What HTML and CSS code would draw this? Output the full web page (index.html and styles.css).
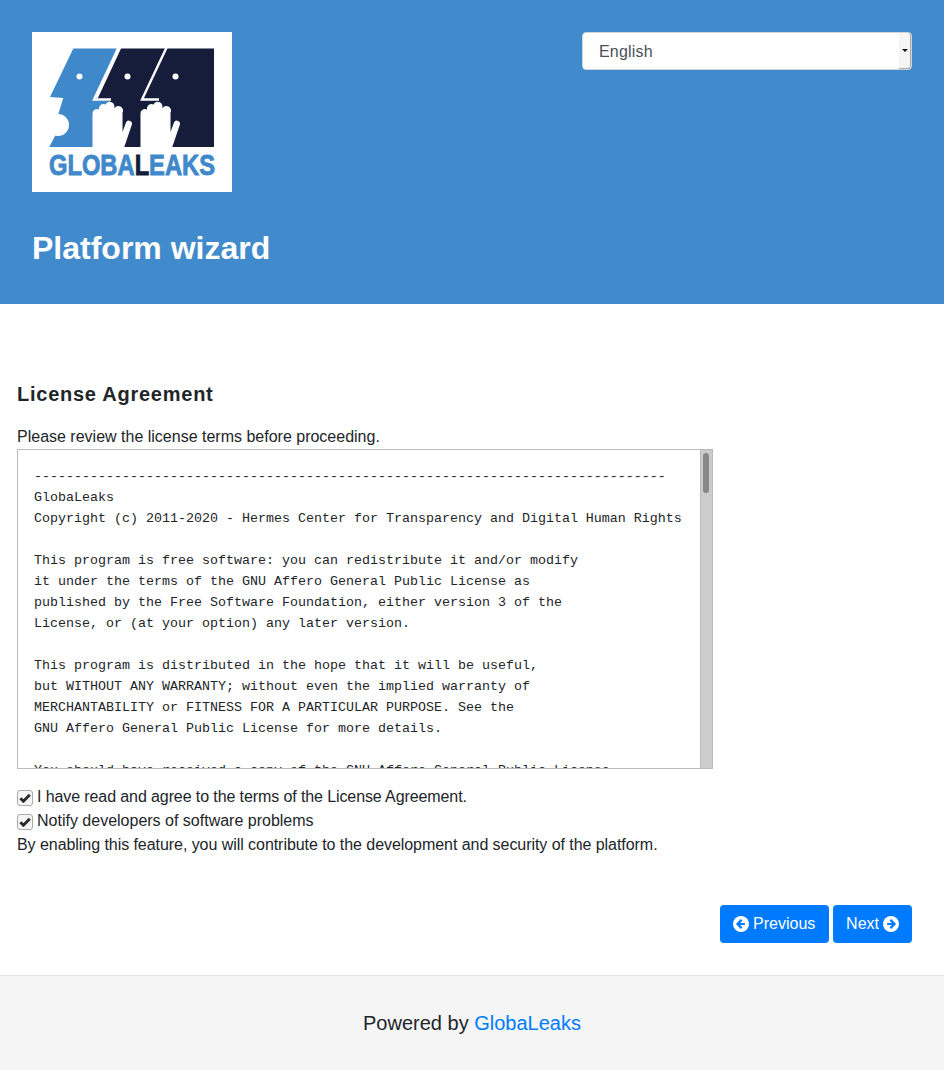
FILE: index.html
```html
<!DOCTYPE html>
<html lang="en">
<head>
<meta charset="utf-8">
<title>Platform wizard</title>
<link rel="stylesheet" href="styles.css">
</head>
<body>
<header class="header">
  <div class="header-top">
    <div class="logo">
      <svg class="logo-svg" viewBox="0 0 200 160" width="200" height="160">
        <polygon fill="#3f89cb" points="41.3,16.5 85,16.5 62,66 80,68 75,115 17.3,115 24,102 26,83 31.3,66 18,65"/>
        <circle cx="26" cy="93" r="11" fill="#fff"/>
        <polygon fill="#161d3a" points="89,16.5 182,16.5 182,115 75,115 78,69 65,68"/>
        <polyline fill="none" stroke="#fff" stroke-width="2.4" points="86.8,15 62,67.5 79,67.5"/>
        <polyline fill="none" stroke="#fff" stroke-width="2.4" points="134.8,15 110,67.5 127,67.5"/>
        <circle cx="47.5" cy="44.5" r="3" fill="#fff"/>
        <circle cx="95.5" cy="44.5" r="3" fill="#fff"/>
        <circle cx="143.5" cy="44.5" r="3" fill="#fff"/>
        <path id="hand" fill="#fff" d="M60.5 115V82A4.5 4.5 0 0 1 67 77.5A4.5 4.5 0 0 1 73.5 72.5A4.5 4.5 0 0 1 82 76.5A4.5 4.5 0 0 1 90.5 81V100L94 90.5A3 3 0 0 1 99.7 93L92.3 115Z"/>
        <use href="#hand" x="48"/>
        <text class="logo-text" x="17" y="143" textLength="166" lengthAdjust="spacingAndGlyphs"><tspan>GLOBA</tspan><tspan class="logo-dark">L</tspan><tspan>EAKS</tspan></text>
      </svg>
    </div>
    <div class="lang-select">
      <span class="lang-value">English</span>
      <span class="lang-button"><span class="caret"></span></span>
    </div>
  </div>
  <h1 class="title">Platform wizard</h1>
</header>

<main class="main">
  <h3 class="section-title">License Agreement</h3>
  <p class="intro">Please review the license terms before proceeding.</p>
  <div class="license">
    <pre class="license-text">-------------------------------------------------------------------------------
GlobaLeaks
Copyright (c) 2011-2020 - Hermes Center for Transparency and Digital Human Rights

This program is free software: you can redistribute it and/or modify
it under the terms of the GNU Affero General Public License as
published by the Free Software Foundation, either version 3 of the
License, or (at your option) any later version.

This program is distributed in the hope that it will be useful,
but WITHOUT ANY WARRANTY; without even the implied warranty of
MERCHANTABILITY or FITNESS FOR A PARTICULAR PURPOSE. See the
GNU Affero General Public License for more details.

You should have received a copy of the GNU Affero General Public License</pre>
    <div class="scrollbar"><div class="thumb"></div></div>
  </div>
  <div class="checks">
    <label class="check-row check-agree"><span class="checkbox"><svg viewBox="0 0 16 16" width="16" height="16"><path d="M3.4 8.2 6.4 11.2 12.8 4.8" fill="none" stroke="#2b2b2b" stroke-width="3"/></svg></span>I have read and agree to the terms of the License Agreement.</label>
    <label class="check-row"><span class="checkbox"><svg viewBox="0 0 16 16" width="16" height="16"><path d="M3.4 8.2 6.4 11.2 12.8 4.8" fill="none" stroke="#2b2b2b" stroke-width="3"/></svg></span>Notify developers of software problems</label>
    <div class="check-note">By enabling this feature, you will contribute to the development and security of the platform.</div>
  </div>
  <div class="actions">
    <button class="btn btn-prev" type="button"><svg class="btn-icon" viewBox="0 0 16 16" width="16" height="16"><circle cx="8" cy="8" r="8" fill="#fff"/><path d="M8.6 3.9 4.5 8l4.1 4.1M4.9 8h7" fill="none" stroke="#007bff" stroke-width="2.2"/></svg> Previous</button>
    <button class="btn" type="button">Next <svg class="btn-icon" viewBox="0 0 16 16" width="16" height="16"><circle cx="8" cy="8" r="8" fill="#fff"/><path d="M7.4 3.9 11.5 8l-4.1 4.1M11.1 8h-7" fill="none" stroke="#007bff" stroke-width="2.2"/></svg></button>
  </div>
</main>

<footer class="footer">Powered by <a class="footer-link" href="#">GlobaLeaks</a></footer>
</body>
</html>
```
FILE: styles.css
```css
* { box-sizing: border-box; }
html, body { margin: 0; padding: 0; }
body {
  font-family: "Liberation Sans", Arial, sans-serif;
  font-size: 16px;
  line-height: 24px;
  color: #212529;
  background: #fff;
}
.header {
  height: 304px;
  background: #418bcc;
  padding: 32px 32px 0;
}
.header-top {
  display: flex;
  justify-content: space-between;
  align-items: flex-start;
}
.logo { width: 200px; height: 160px; background: #fff; }
.logo-svg { display: block; }
.logo-text {
  font-family: "Liberation Sans Narrow", "Liberation Sans", sans-serif;
  font-size: 29px;
  font-weight: 700;
  fill: #3f89cb;
  stroke: #3f89cb;
  stroke-width: 0.9px;
}
.logo-dark { fill: #161d3a; stroke: #161d3a; }
.lang-select {
  width: 330px;
  height: 38px;
  display: flex;
  justify-content: space-between;
  background: #fff;
  border: 1px solid #ced4da;
  border-radius: 4px;
  padding-left: 16px;
  color: #495057;
  line-height: 38px;
  letter-spacing: 0.2px;
}
.lang-button {
  width: 12px;
  height: 36px;
  display: flex;
  align-items: center;
  justify-content: center;
  background: #f5f5f5;
  border-right: 1px solid #aaa;
  border-bottom: 1px solid #aaa;
  border-radius: 0 3px 3px 0;
}
.caret {
  width: 0;
  height: 0;
  border-left: 3px solid transparent;
  border-right: 3px solid transparent;
  border-top: 3px solid #111;
}
.title {
  margin: 36px 0 0;
  font-size: 32px;
  line-height: 40px;
  font-weight: 700;
  color: #fff;
}
.main { padding: 0 32px 0 17px; }
.section-title {
  margin: 0;
  padding-top: 77px;
  font-size: 20px;
  line-height: 26px;
  font-weight: 700;
  letter-spacing: 0.75px;
}
.intro { margin: 18px 0 0; line-height: 24px; }
.license {
  width: 696px;
  height: 320px;
  border: 1px solid #bbb;
  display: flex;
  overflow: hidden;
}
.license-text {
  flex: 1;
  margin: 0;
  padding: 16px 16px 0;
  font-family: "Liberation Mono", "Courier New", monospace;
  font-size: 13.33px;
  line-height: 21px;
  color: #212529;
  overflow: hidden;
}
.scrollbar { width: 12px; background: #ccc; border-left: 1px solid #bbb; flex: none; padding: 3px 2px; }
.thumb { width: 6px; height: 40px; border-radius: 3px; background: #888; }
.checks { margin-top: 16px; }
.check-row { display: flex; align-items: center; gap: 4px; height: 24px; }
.check-agree { letter-spacing: -0.1px; }
.checkbox {
  width: 16px;
  height: 16px;
  border: 1px solid #aaa;
  border-radius: 3px;
  background: #f5f5f5;
  display: block;
  overflow: hidden;
  margin-top: 2px;
}
.checkbox svg { display: block; margin: -1px; }
.check-note { letter-spacing: -0.055px; }
.actions {
  display: flex;
  justify-content: flex-end;
  gap: 4px;
  margin-top: 48px;
}
.btn {
  height: 38px;
  padding: 0 13px;
  background: #007bff;
  color: #fff;
  border: 0;
  border-radius: 4px;
  font: inherit;
  display: flex;
  align-items: center;
  gap: 4px;
}
.btn-prev { width: 109px; }
.btn-icon { display: block; }
.footer {
  margin-top: 32px;
  height: 95px;
  background: #f5f5f5;
  border-top: 1px solid #e5e5e5;
  text-align: center;
  font-size: 20px;
  line-height: 94px;
}
.footer-link { color: #007bff; text-decoration: none; }
```
